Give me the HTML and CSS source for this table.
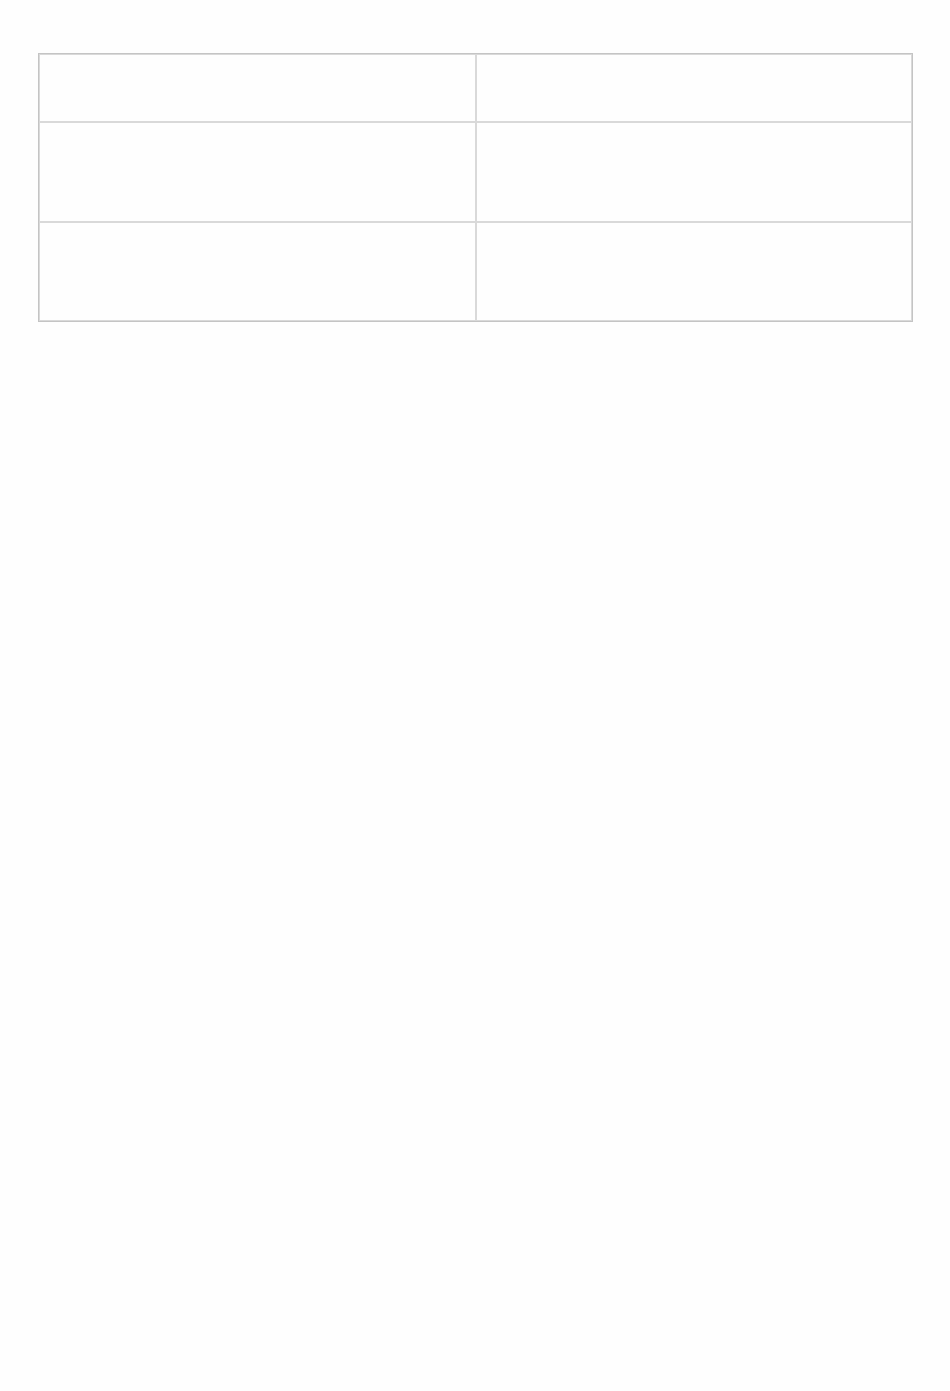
FILE: index.html
```html
<!DOCTYPE html>
<html>
<head>
<meta charset="utf-8">
<link rel="stylesheet" href="styles.css">
</head>
<body>
<div class="page">
  <table class="grid">
    <tr class="row-short"><td></td><td></td></tr>
    <tr class="row-tall"><td></td><td></td></tr>
    <tr class="row-last"><td></td><td></td></tr>
  </table>
</div>
</body>
</html>
```
FILE: styles.css
```css
html, body {
  margin: 0;
  padding: 0;
  background: #fefefe;
  font-family: "Liberation Sans", Arial, sans-serif;
}
.page {
  padding: 53px 37px 0 38px;
}
.grid {
  width: 875px;
  border: 1px solid #c4c4c4;
  border-spacing: 0;
  border-collapse: separate;
  table-layout: fixed;
}
.grid td {
  border: 1px solid #d9d9d9;
  padding: 0;
  box-sizing: border-box;
}
.grid td:first-child {
  width: 437px;
}
.row-short td {
  height: 68px;
}
.row-tall td {
  height: 100px;
}
.row-last td {
  height: 99px;
}
```
